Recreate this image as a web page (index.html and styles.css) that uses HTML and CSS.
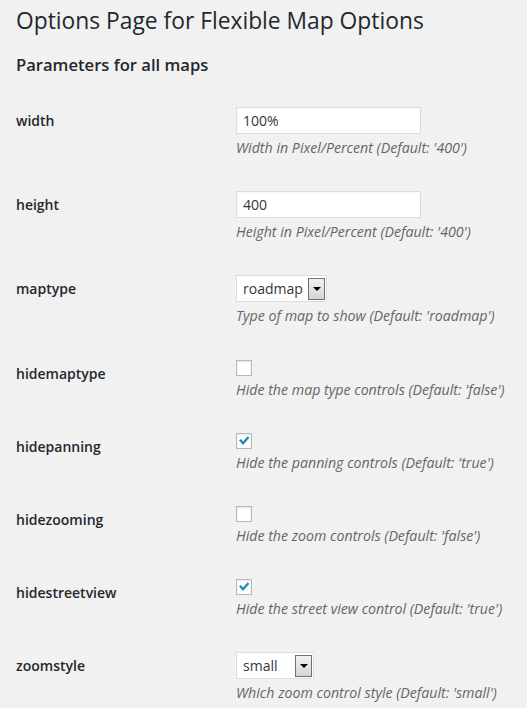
FILE: index.html
```html
<!DOCTYPE html>
<html>
<head>
<meta charset="utf-8">
<link rel="stylesheet" href="styles.css">
</head>
<body>
<div class="wrap">
  <h1 class="title">Options Page for Flexible Map Options</h1>
  <h2 class="section">Parameters for all maps</h2>
  <div class="form-table">
    <div class="row row-text">
      <div class="th">width</div>
      <div class="td">
        <input class="text-input" type="text" value="100%">
        <p class="description">Width in Pixel/Percent (Default: '400')</p>
      </div>
    </div>
    <div class="row row-text">
      <div class="th">height</div>
      <div class="td">
        <input class="text-input" type="text" value="400">
        <p class="description">Height in Pixel/Percent (Default: '400')</p>
      </div>
    </div>
    <div class="row row-select">
      <div class="th">maptype</div>
      <div class="td">
        <div class="select select-wide"><span class="select-value">roadmap</span><span class="select-btn"><span class="arrow"></span></span></div>
        <p class="description">Type of map to show (Default: 'roadmap')</p>
      </div>
    </div>
    <div class="row row-check">
      <div class="th">hidemaptype</div>
      <div class="td">
        <span class="checkbox"></span>
        <p class="description">Hide the map type controls (Default: 'false')</p>
      </div>
    </div>
    <div class="row row-check">
      <div class="th">hidepanning</div>
      <div class="td">
        <span class="checkbox"><svg viewBox="0 0 16 16" width="16" height="16"><path d="M3 7.6 L5 6 L7 8.6 L11.6 3.2 L13.4 4.8 L7.1 12 Z" fill="#1e8cbe"/></svg></span>
        <p class="description">Hide the panning controls (Default: 'true')</p>
      </div>
    </div>
    <div class="row row-check">
      <div class="th">hidezooming</div>
      <div class="td">
        <span class="checkbox"></span>
        <p class="description">Hide the zoom controls (Default: 'false')</p>
      </div>
    </div>
    <div class="row row-check">
      <div class="th">hidestreetview</div>
      <div class="td">
        <span class="checkbox"><svg viewBox="0 0 16 16" width="16" height="16"><path d="M3 7.6 L5 6 L7 8.6 L11.6 3.2 L13.4 4.8 L7.1 12 Z" fill="#1e8cbe"/></svg></span>
        <p class="description">Hide the street view control (Default: 'true')</p>
      </div>
    </div>
    <div class="row row-select">
      <div class="th">zoomstyle</div>
      <div class="td">
        <div class="select select-narrow"><span class="select-value">small</span><span class="select-btn"><span class="arrow"></span></span></div>
        <p class="description">Which zoom control style (Default: 'small')</p>
      </div>
    </div>
  </div>
</div>
</body>
</html>
```

FILE: styles.css
```css
html, body {
  margin: 0;
  padding: 0;
  background: #f1f1f1;
}
body {
  font-family: "Open Sans", "DejaVu Sans", sans-serif;
  color: #23282d;
  font-size: 13px;
}
.wrap {
  padding: 0 16px;
}
.title {
  margin: 0;
  padding-top: 6px;
  font-size: 22.8px;
  font-weight: 400;
  line-height: 29px;
  color: #23282d;
}
.section {
  margin: 0;
  padding-top: 19px;
  font-size: 16.6px;
  font-weight: 600;
  line-height: 22px;
  color: #23282d;
}
.form-table {
  margin-top: 16px;
  display: flex;
  flex-direction: column;
}
.row {
  display: grid;
  grid-template-columns: 220px 1fr;
}
.th {
  padding-top: 20px;
  font-size: 14px;
  font-weight: 600;
  line-height: 18px;
}
.td {
  padding-top: 15px;
  padding-bottom: 18px;
  display: flex;
  flex-direction: column;
  align-items: flex-start;
}
.row-select .td {
  padding-bottom: 19px;
}
.text-input {
  box-sizing: border-box;
  width: 185px;
  height: 27px;
  margin: 0;
  padding: 3px 6px;
  border: 1px solid #ddd;
  background: #fff;
  font-family: "Open Sans", sans-serif;
  font-size: 14px;
  color: #32373c;
  outline: none;
  box-shadow: inset 0 1px 2px rgba(0,0,0,0.04);
}
.description {
  margin: 4px 0 0;
  font-size: 14.2px;
  font-style: italic;
  line-height: 20px;
  color: #666;
}
.select {
  box-sizing: border-box;
  height: 27px;
  border: 1px solid #ddd;
  background: #fff;
  display: flex;
  align-items: flex-start;
  justify-content: space-between;
  padding: 2px 1px 1px 6px;
}
.select-wide { width: 91px; }
.select-narrow { width: 78px; }
.select-value {
  font-size: 14px;
  line-height: 21px;
  color: #32373c;
}
.select-btn {
  box-sizing: border-box;
  width: 17px;
  height: 22px;
  border: 1px solid #707070;
  background: linear-gradient(#f2f2f2, #d4d4d4);
  display: flex;
  align-items: center;
  justify-content: center;
}
.arrow {
  width: 0;
  height: 0;
  border-left: 4px solid transparent;
  border-right: 4px solid transparent;
  border-top: 4px solid #000;
  margin-top: -1px;
}
.checkbox {
  box-sizing: border-box;
  width: 16px;
  height: 16px;
  border: 1px solid #b4b9be;
  background: #fff;
  display: flex;
  align-items: center;
  justify-content: center;
  box-shadow: inset 0 1px 2px rgba(0,0,0,0.1);
}
.checkbox svg {
  display: block;
  flex: none;
}
```
